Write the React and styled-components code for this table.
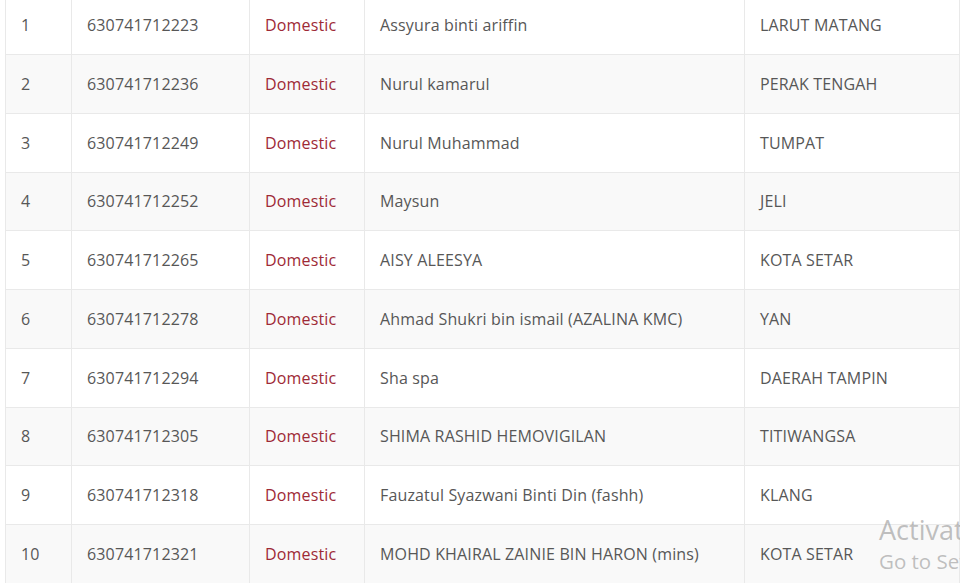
import React from "react";
import styled, { createGlobalStyle } from "styled-components";

const Global = createGlobalStyle`
  html, body { margin: 0; padding: 0; background: #fff; overflow: hidden; }
  body { font-family: "Open Sans", "Noto Sans", sans-serif; }
`;

const Page = styled.div`
  position: relative;
  width: 960px;
  height: 583px;
  overflow: hidden;
  background: #fff;
`;

const Scroller = styled.div`
  margin-top: -4.75px;
  padding-left: 5px;
  padding-right: 1px;
`;

const Table = styled.table`
  width: 954px;
  border-collapse: collapse;
  table-layout: fixed;
  font-size: 16px;
  color: #555;
`;

const Row = styled.tr`
  height: 58.75px;
  background: ${(p) => (p.$striped ? "#f9f9f9" : "#fff")};
`;

const Cell = styled.td`
  border: 1px solid #e9e9e9;
  padding: 0 15px;
  vertical-align: middle;
  white-space: nowrap;
  overflow: hidden;
  letter-spacing: 0.15px;
  color: ${(p) => (p.$accent ? "#9e2a36" : "#575757")};
`;

const Watermark = styled.div`
  position: absolute;
  left: 879px;
  top: 511px;
  color: rgba(150, 150, 150, 0.6);
  font-family: "Open Sans", "Noto Sans", sans-serif;
  white-space: nowrap;
  pointer-events: none;
`;

const WmTitle = styled.div`
  font-size: 27px;
  line-height: 38px;
`;

const WmSub = styled.div`
  font-size: 20.5px;
  line-height: 24px;
`;

const rows = [
  ["1", "630741712223", "Assyura binti ariffin", "LARUT MATANG"],
  ["2", "630741712236", "Nurul kamarul", "PERAK TENGAH"],
  ["3", "630741712249", "Nurul Muhammad", "TUMPAT"],
  ["4", "630741712252", "Maysun", "JELI"],
  ["5", "630741712265", "AISY ALEESYA", "KOTA SETAR"],
  ["6", "630741712278", "Ahmad Shukri bin ismail (AZALINA KMC)", "YAN"],
  ["7", "630741712294", "Sha spa", "DAERAH TAMPIN"],
  ["8", "630741712305", "SHIMA RASHID HEMOVIGILAN", "TITIWANGSA"],
  ["9", "630741712318", "Fauzatul Syazwani Binti Din (fashh)", "KLANG"],
  ["10", "630741712321", "MOHD KHAIRAL ZAINIE BIN HARON (mins)", "KOTA SETAR"],
];

export default function App() {
  return (
    <Page>
      <Global />
      <Scroller>
        <Table>
          <colgroup>
            <col style={{ width: 66 }} />
            <col style={{ width: 178 }} />
            <col style={{ width: 115 }} />
            <col style={{ width: 380 }} />
            <col style={{ width: 215 }} />
          </colgroup>
          <tbody>
            {rows.map((r, i) => (
              <Row key={r[0]} $striped={i % 2 === 1}>
                <Cell>{r[0]}</Cell>
                <Cell>{r[1]}</Cell>
                <Cell $accent>Domestic</Cell>
                <Cell>{r[2]}</Cell>
                <Cell>{r[3]}</Cell>
              </Row>
            ))}
          </tbody>
        </Table>
      </Scroller>
      <Watermark>
        <WmTitle>Activate Windows</WmTitle>
        <WmSub>Go to Settings to activate Windows.</WmSub>
      </Watermark>
    </Page>
  );
}
